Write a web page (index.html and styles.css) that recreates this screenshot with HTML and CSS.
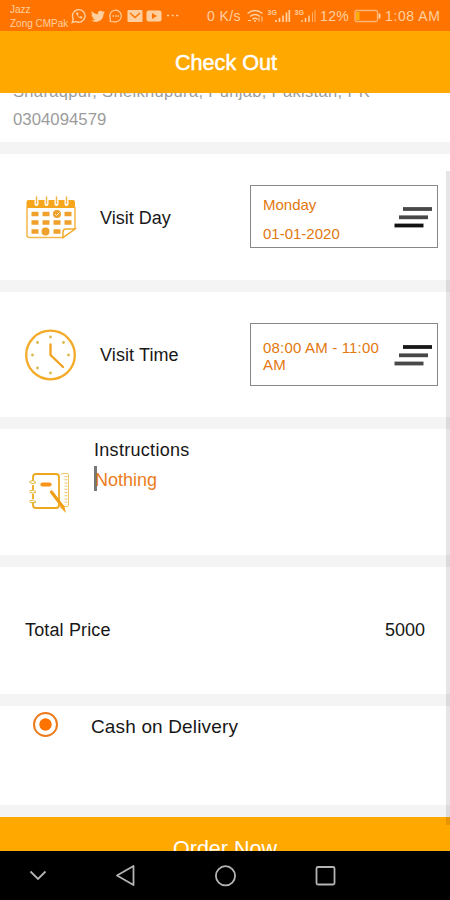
FILE: index.html
```html
<!DOCTYPE html>
<html lang="en">
<head>
<meta charset="utf-8">
<title>Check Out</title>
<link rel="stylesheet" href="styles.css">
</head>
<body>
<div class="phone">
  <div class="status">
    <div class="carrier"><span>Jazz</span><span>Zong CMPak</span></div>
    <svg class="notifications" width="110" height="16" viewBox="0 0 110 16" fill="none" stroke="#ffcfa0" stroke-width="1.4">
      <path d="M1.2 14.6 2.3 11A6.3 6.3 0 1 1 4.7 13.4Z"/>
      <path d="M5.4 4.6c-1.2 1.7 2.8 6.5 5.4 5.8l.8-1.5-1.9-1-.9 1c-1-.4-1.6-1-2-2l.8-.9-.8-1.7Z" fill="#ffcfa0" stroke="none"/>
      <path d="M20 12.500c2 .1 3.100-.4 4-1.100-1.400-.2-2.200-.9-2.500-1.900h1.200c-1.400-.6-2.200-1.500-2.200-2.800l1.200.3c-1.200-1-1.600-2.300-.8-3.800 1.700 1.800 3.400 2.800 5.800 3C26.500 3.600 29.500 1.500 31.600 3.700l2-.8-1.200 1.800 1.600-.4-1.500 1.600C32.400 13 25.500 15.500 20 12.500Z" fill="#ffcfa0" stroke="none"/>
      <path d="M39.300 13.500v-3A5.800 5.800 0 1 1 45 13.800Z" stroke-width="1.200"/>
      <path d="M41.500 8h7" stroke-dasharray="1.500 1"/>
      <rect x="56.500" y="2" width="15" height="12" rx="1" fill="#ffcfa0" stroke="none"/>
      <path d="m59 5 5 4.500L69 5" stroke="#ff7400"/>
      <rect x="75.500" y="2.500" width="15" height="11" rx="2" fill="#ffcfa0" stroke="none"/>
      <path d="M81 5v6l5-3Z" fill="#ff7400" stroke="none"/>
      <path d="M96 7.500h12" stroke-dasharray="2 2.600" stroke-width="1.500"/>
    </svg>
    <span class="speed">0 K/s</span>
    <svg class="signals" width="72" height="16" viewBox="0 0 72 16" fill="none" stroke="#ffcfa0" stroke-width="1.500">
      <path d="M1.500 5.500Q9-.5 16.500 5.500M4 8.500q5-4 10 0M6.500 11.300q2.500-2 5 0"/>
      <circle cx="9" cy="13" r="1" fill="#ffcfa0" stroke="none"/>
      <path d="M2 12.500h3M13 9.500v4M16 8.500v5" stroke-width="1"/>
      <path d="M30 14v-2M33.500 14v-4M37 14V7.500M40.500 14V4.500M43.300 14V2" stroke-width="1.700"/>
      <path d="M56 14v-2M59.500 14v-4M63 14V7.500"/>
      <path d="M66.500 14V4.500M69 14V2" stroke-width="1" opacity=".7"/>
      <text x="21.500" y="6.500">3G</text><text x="48.500" y="6.500">3G</text>
    </svg>
    <span class="percent">12%</span>
    <svg class="battery" width="27" height="14" viewBox="0 0 27 14">
      <rect x="1" y="1.500" width="22.500" height="11" rx="1.500" fill="none" stroke="#ffb57a" stroke-width="1.300"/>
      <path d="M2 3h3.500v8H2Z" fill="#ffb000"/><path d="M24.500 4.500h2v5h-2Z" fill="#ffcfa0"/>
    </svg>
    <span class="clock">1:08 AM</span>
  </div>

  <header class="header">Check Out</header>

  <main class="content">
    <section class="address">
      <p class="place">Sharaqpur, Sheikhupura, Punjab, Pakistan, PK</p>
      <p class="number">0304094579</p>
    </section>

    <section class="row day">
      <svg class="row-icon" width="52" height="44" viewBox="0 0 52 44">
        <path d="M3.500 5H48q2 0 2 2v6H1.500V7q0-2 2-2Z" fill="#f7a51a"/>
        <path d="M2 12v28q0 2.500 2.500 2.500H38L50 33V12" fill="none" stroke="#f5b84a" stroke-width="1.500"/>
        <path d="M38 42.500V37q0-3 3-3h9Z" fill="#fff" stroke="#f2ac2c" stroke-width="1.500"/>
        <path d="M11.500 3v6M21.500 3v6M31.500 3v6M41.500 3v6" stroke="#fff" stroke-width="4" stroke-linecap="round"/>
        <path d="M11.500 2v6.500M21.500 2v6.500M31.500 2v6.500M41.500 2v6.500" stroke="#f3b64d" stroke-width="1.500" stroke-linecap="round"/>
        <path d="M6.500 19h7M17.500 19h7M39.500 19h7M6.500 27.500h7M17.500 27.500h7M28.500 27.500h7M39.500 27.500h7M6.500 36.500h7M28.500 36.500h7" stroke="#efa12b" stroke-width="4.500"/>
        <circle cx="32" cy="19" r="4" fill="#efa12b"/><circle cx="20.500" cy="36.500" r="4" fill="#efa12b"/>
        <path d="m30 19 1.500 1.500 3-3" fill="none" stroke="#fff" stroke-width=".8"/>
      </svg>
      <span class="label">Visit Day</span>
      <div class="picker">
        <div class="value date"><span>Monday</span><span>01-01-2020</span></div>
        <svg class="menu" width="38" height="24" viewBox="0 0 38 24" stroke-width="3.800"><path d="M9 4h29" stroke="#484848"/><path d="M5 12.300h29" stroke="#484848"/><path d="M.5 20.500h29" stroke="#111"/></svg>
      </div>
    </section>

    <section class="row time">
      <svg class="row-icon" width="52" height="52" viewBox="0 0 52 52">
        <circle cx="25.500" cy="26" r="24.300" fill="none" stroke="#f3ab29" stroke-width="2.300"/>
        <path d="M25.500 15.500V26L38 38" fill="none" stroke="#f0a01c" stroke-width="2.300" stroke-linecap="round" stroke-linejoin="round"/>
        <g fill="#dcb94b"><circle cx="25.500" cy="8" r="1.400"/><circle cx="38.500" cy="13.500" r="1.400"/><circle cx="43.500" cy="26" r="1.400"/><circle cx="25.500" cy="44" r="1.400"/><circle cx="12.500" cy="39" r="1.400"/><circle cx="7.500" cy="26" r="1.400"/><circle cx="12.500" cy="13.500" r="1.400"/></g>
      </svg>
      <span class="label">Visit Time</span>
      <div class="picker">
        <div class="value">08:00 AM - 11:00 AM</div>
        <svg class="menu" width="38" height="24" viewBox="0 0 38 24" stroke-width="3.800"><path d="M9 4h29" stroke="#181818"/><path d="M5 12.300h29" stroke="#484848"/><path d="M.5 20.500h29" stroke="#484848"/></svg>
      </div>
    </section>

    <section class="notes">
      <svg class="note-icon" width="42" height="42" viewBox="0 0 42 42" fill="none" stroke="#efa81d" stroke-width="1.800">
        <path d="M4 9V5q0-3 3-3H27q3 0 3 3v28q0 3-3 3H7q-3 0-3-3v-3M4 13v5M4 22v5"/>
        <path d="M.5 9.500q4-2.500 6.500 1-3 2.500-6.500 0M.5 19q4-2.500 6.500 1-3 2.500-6.500 0M.5 29q4-2.500 6.500 1-3 2.500-6.500 0" stroke-width="1" stroke="#e2b535"/>
        <path d="M13.500 12.500H20.500" stroke="#fb941b" stroke-width="4.200" stroke-linecap="round"/>
        <path d="M32 3q0-1.500 1.500-1.500H38q1.500 0 1.500 1.500v30q0 1.500-1.500 1.500h-3" stroke="#edc56c" stroke-width="1"/>
        <path d="M37 4v29" stroke="#edc56c" stroke-width="3" stroke-dasharray="1 2.200"/>
        <path d="m22.500 20 11 14.500" stroke="#f09e18" stroke-width="3.200" stroke-linecap="round"/>
        <path d="m31 35 6 6-2-8" fill="#f7a01a" stroke="none"/>
      </svg>
      <div class="note-text"><span class="note-title">Instructions</span><span class="note-value">Nothing</span></div>
    </section>

    <section class="total"><span>Total Price</span><span class="amount">5000</span></section>

    <section class="payment"><span class="radio"></span><span class="method">Cash on Delivery</span></section>

    <div class="order">Order Now</div>
    <div class="scrollbar"></div>
  </main>

  <nav class="nav">
    <svg width="450" height="49" viewBox="0 0 450 49" fill="none" stroke="#b4b4b4" stroke-width="1.800">
      <path d="m30.500 20.500 7.500 7.500 7.500-7.500"/>
      <path d="m117 24.500 16.500-9.500v19Z" stroke-linejoin="round"/>
      <circle cx="225.500" cy="24.800" r="9.600"/>
      <rect x="316.500" y="16" width="18" height="17.500" rx="1.500"/>
    </svg>
  </nav>
</div>
</body>
</html>
```

FILE: styles.css
```css
* { box-sizing: border-box; }
body { margin: 0; font-family: "Liberation Sans", Arial, sans-serif; color: #171717; }
p { margin: 0; }
svg { display: block; flex: none; }

.phone { width: 450px; height: 900px; display: flex; flex-direction: column; overflow: hidden; background: #fff; }

.status { height: 31px; flex: none; display: flex; align-items: center; padding-left: 10px; background: #ff7400; color: #ffcfa0; font-size: 14px; white-space: nowrap; }
.carrier { width: 61px; display: flex; flex-direction: column; padding-top: 2px; font-size: 10px; line-height: 14px; }
.notifications { margin-right: 26px; }
.speed { width: 39px; letter-spacing: .4px; }
.signals { margin-right: 2px; }
.signals text { font-size: 7px; font-weight: bold; fill: #ffcfa0; stroke: none; }
.percent { width: 34px; letter-spacing: .4px; }
.battery { margin-right: 4px; }
.clock { letter-spacing: .6px; }

.header { height: 62px; flex: none; background: #ffa800; color: #fff; font-size: 21.6px; line-height: 63px; text-align: center; padding-left: 2px; -webkit-text-stroke: .5px #fff; }

.content { position: relative; height: 758px; flex: none; overflow: hidden; }
.content > section { border-bottom: 12px solid #f4f4f4; }

.address { display: flex; flex-direction: column; height: 61px; padding-left: 13px; color: #9c9c9c; }
.place { height: 14px; flex: none; margin-top: -12px; margin-bottom: 16px; line-height: 20px; font-size: 16.5px; letter-spacing: .34px; white-space: nowrap; }
.number { font-size: 16.8px; line-height: 18px; }

.row { display: flex; padding-left: 25px; }
.row-icon { margin-right: 23px; }
.day { height: 138px; padding-top: 31px; }
.day .row-icon { margin-top: 10px; }
.time { height: 137px; padding-top: 31px; }
.time .row-icon { margin-top: 6px; }
.label { width: 150px; font-size: 18px; line-height: 66px; }
.time .label { line-height: 65px; letter-spacing: .1px; }
.picker { display: flex; align-items: center; justify-content: space-between; width: 188px; height: 63px; padding: 0 5px 0 12px; border: 1.500px solid #888; color: #e2780e; }
.value { width: 124px; font-size: 15px; line-height: 17px; letter-spacing: .18px; }
.date { display: flex; flex-direction: column; line-height: 28.500px; padding-top: 6px; letter-spacing: 0; }
.time .value { padding-top: 3px; }

.notes { height: 138px; display: flex; padding: 11px 0 0 29px; }
.note-icon { margin: 32px 23px 0 0; }
.note-text { display: flex; flex-direction: column; align-items: flex-start; font-size: 18px; }
.note-title { line-height: 20px; letter-spacing: .3px; }
.note-value { margin-top: 6px; height: 25px; line-height: 28px; border-left: 3px solid #777; color: #ec7d1d; text-indent: -2px; }

.total { height: 139px; display: flex; justify-content: space-between; padding: 0 25px; font-size: 18px; line-height: 127px; letter-spacing: .15px; }
.amount { letter-spacing: 0; }
.payment { height: 111px; display: flex; padding: 6px 0 0 33px; }
.radio { width: 25px; height: 25px; border: 2.500px solid #ed7b1c; border-radius: 50%; background: radial-gradient(circle, #ff7400 5.800px, #fff 6.500px); }
.method { margin-left: 33px; font-size: 19px; line-height: 29px; letter-spacing: .15px; }
.order { height: 60px; background: #ffa800; color: #fff; font-size: 21.500px; line-height: 64px; text-align: center; }
.scrollbar { position: absolute; top: 78px; right: 0; width: 4px; height: 654px; background: rgba(0, 0, 0, .1); }
.nav { height: 49px; flex: none; background: #000; }
```
